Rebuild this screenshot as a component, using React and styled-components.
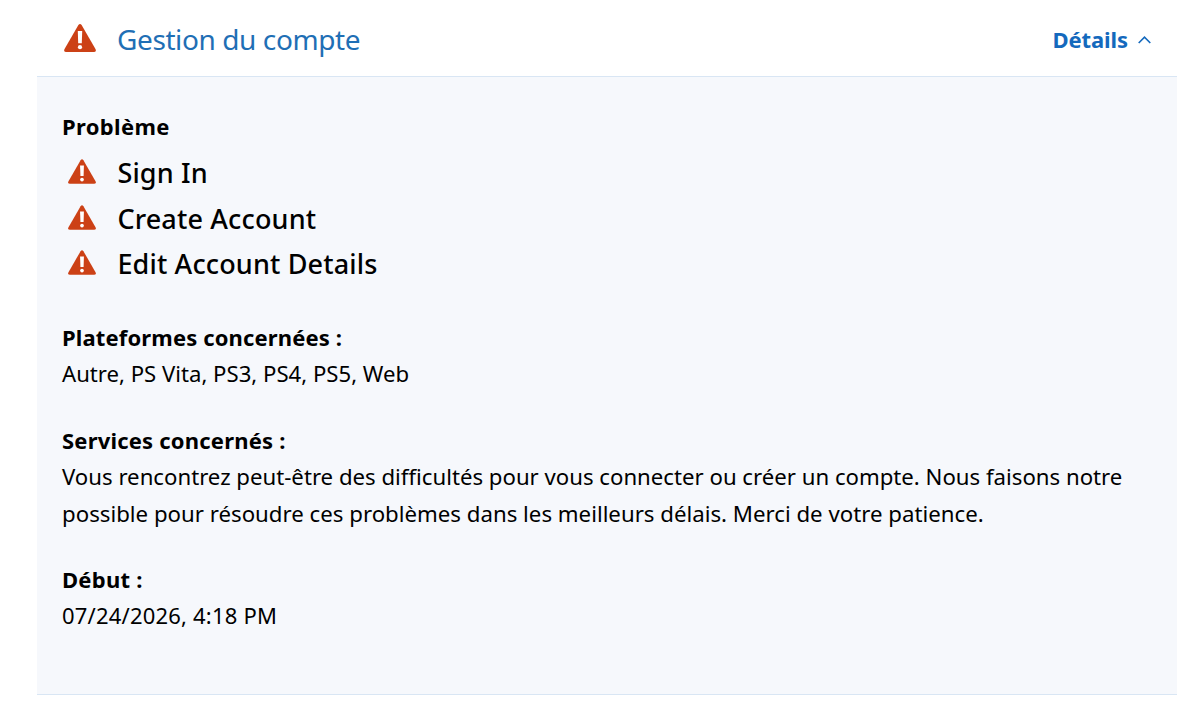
import React from 'react';
import styled, { createGlobalStyle } from 'styled-components';

const Global = createGlobalStyle`
  * { box-sizing: border-box; }
  body { margin: 0; background: #fff; color: #000; font-family: "Noto Sans", "Open Sans", sans-serif; }
`;
const Page = styled.main`
  width: 1200px; height: 711px; overflow: hidden; padding: 0 23px 0 37px;
`;
const Header = styled.header`
  height: 77px; display: flex; align-items: center; padding: 2px 26px 0 26.5px;
  border-bottom: 1px solid #d9e6f4;
`;
const Text = styled.span`
  display: block; white-space: nowrap; width: max-content; margin: 0;
  font-size: ${p => p.$size || 22}px; font-weight: ${p => p.$weight || 400};
  letter-spacing: ${p => (p.$track ? `${p.$track}px` : 'normal')};
  line-height: ${p => p.$line || 36}px;
`;
const Label = styled(Text).attrs({ $weight: 700 })`letter-spacing: ${p => p.$track || 0.14}px;`;
const Title = styled(Text)`color: #1f6fb5; margin-left: 21.5px;`;
const Toggle = styled.button`
  margin-left: auto; border: 0; background: none; padding: 0; color: #1469bd;
  font-family: inherit; display: flex; align-items: center; gap: 10px;
`;
const Chevron = styled.svg`display: block; margin-top: 2px;`;
const Panel = styled.section`
  height: 618px; background: #f6f8fc; border-bottom: 1px solid #d9e6f4; padding: 31px 25px 0;
`;
const IssueList = styled.ul`list-style: none; margin: 6.4px 0 32.1px; padding: 0;`;
const Issue = styled.li`display: flex; align-items: center; height: 45.5px; gap: 21.4px; padding-left: 6px;`;
const Group = styled.section`margin-bottom: ${p => p.$gap || 31}px;`;
const WarningIcon = styled.svg`display: block; flex: none; margin-bottom: ${p => p.$lift}px;`;

function Warning({ width = 32, height = 28, lift = 2 }) {
  return (
    <WarningIcon $lift={lift} width={width} height={height} viewBox="0 0 32 28" aria-hidden="true">
      <path d="M14.4 1Q16-.9 17.6 1L31.6 25.3Q32.5 28 29.8 28H2.2Q-.5 28 .4 25.3Z" fill="#cc4116" />
      <path d="M13.8 7h4.4l-.4 12.2h-3.6z" fill="#fff" />
      <circle cx="16" cy="23.2" r="2.1" fill="#fff" />
    </WarningIcon>
  );
}

export default function App() {
  return (
    <Page>
      <Global />
      <Header>
        <Warning />
        <Title as="h1" $size={28} $track={-0.4}>Gestion du compte</Title>
        <Toggle>
          <Text $weight={700} $track={-0.1}>Détails</Text>
          <Chevron width="13" height="8" viewBox="0 0 13 8" fill="none" stroke="currentColor" strokeWidth="1.6"><path d="m.7 7 5.8-5.8L12.3 7" /></Chevron>
        </Toggle>
      </Header>
      <Panel>
        <Label $track={0.35}>Problème</Label>
        <IssueList>
          {['Sign In', 'Create Account', 'Edit Account Details'].map(name => (
            <Issue key={name}><Warning width={28} height={25} lift={3} /><Text $size={27} $weight={500} $track={0.15}>{name}</Text></Issue>
          ))}
        </IssueList>
        <Group><Label>Plateformes concernées :</Label><Text $size={22.15}>Autre, PS Vita, PS3, PS4, PS5, Web</Text></Group>
        <Group $gap={28}>
          <Label $track={0.2}>Services concernés :</Label>
          <Text $size={22.19} $line={37}>Vous rencontrez peut-être des difficultés pour vous connecter ou créer un compte. Nous faisons notre</Text>
          <Text $size={22.24} $line={38}>possible pour résoudre ces problèmes dans les meilleurs délais. Merci de votre patience.</Text>
        </Group>
        <Group><Label $track={0.25}>Début :</Label><Text $track={0.2}>07/24/2026, 4:18 PM</Text></Group>
      </Panel>
    </Page>
  );
}
